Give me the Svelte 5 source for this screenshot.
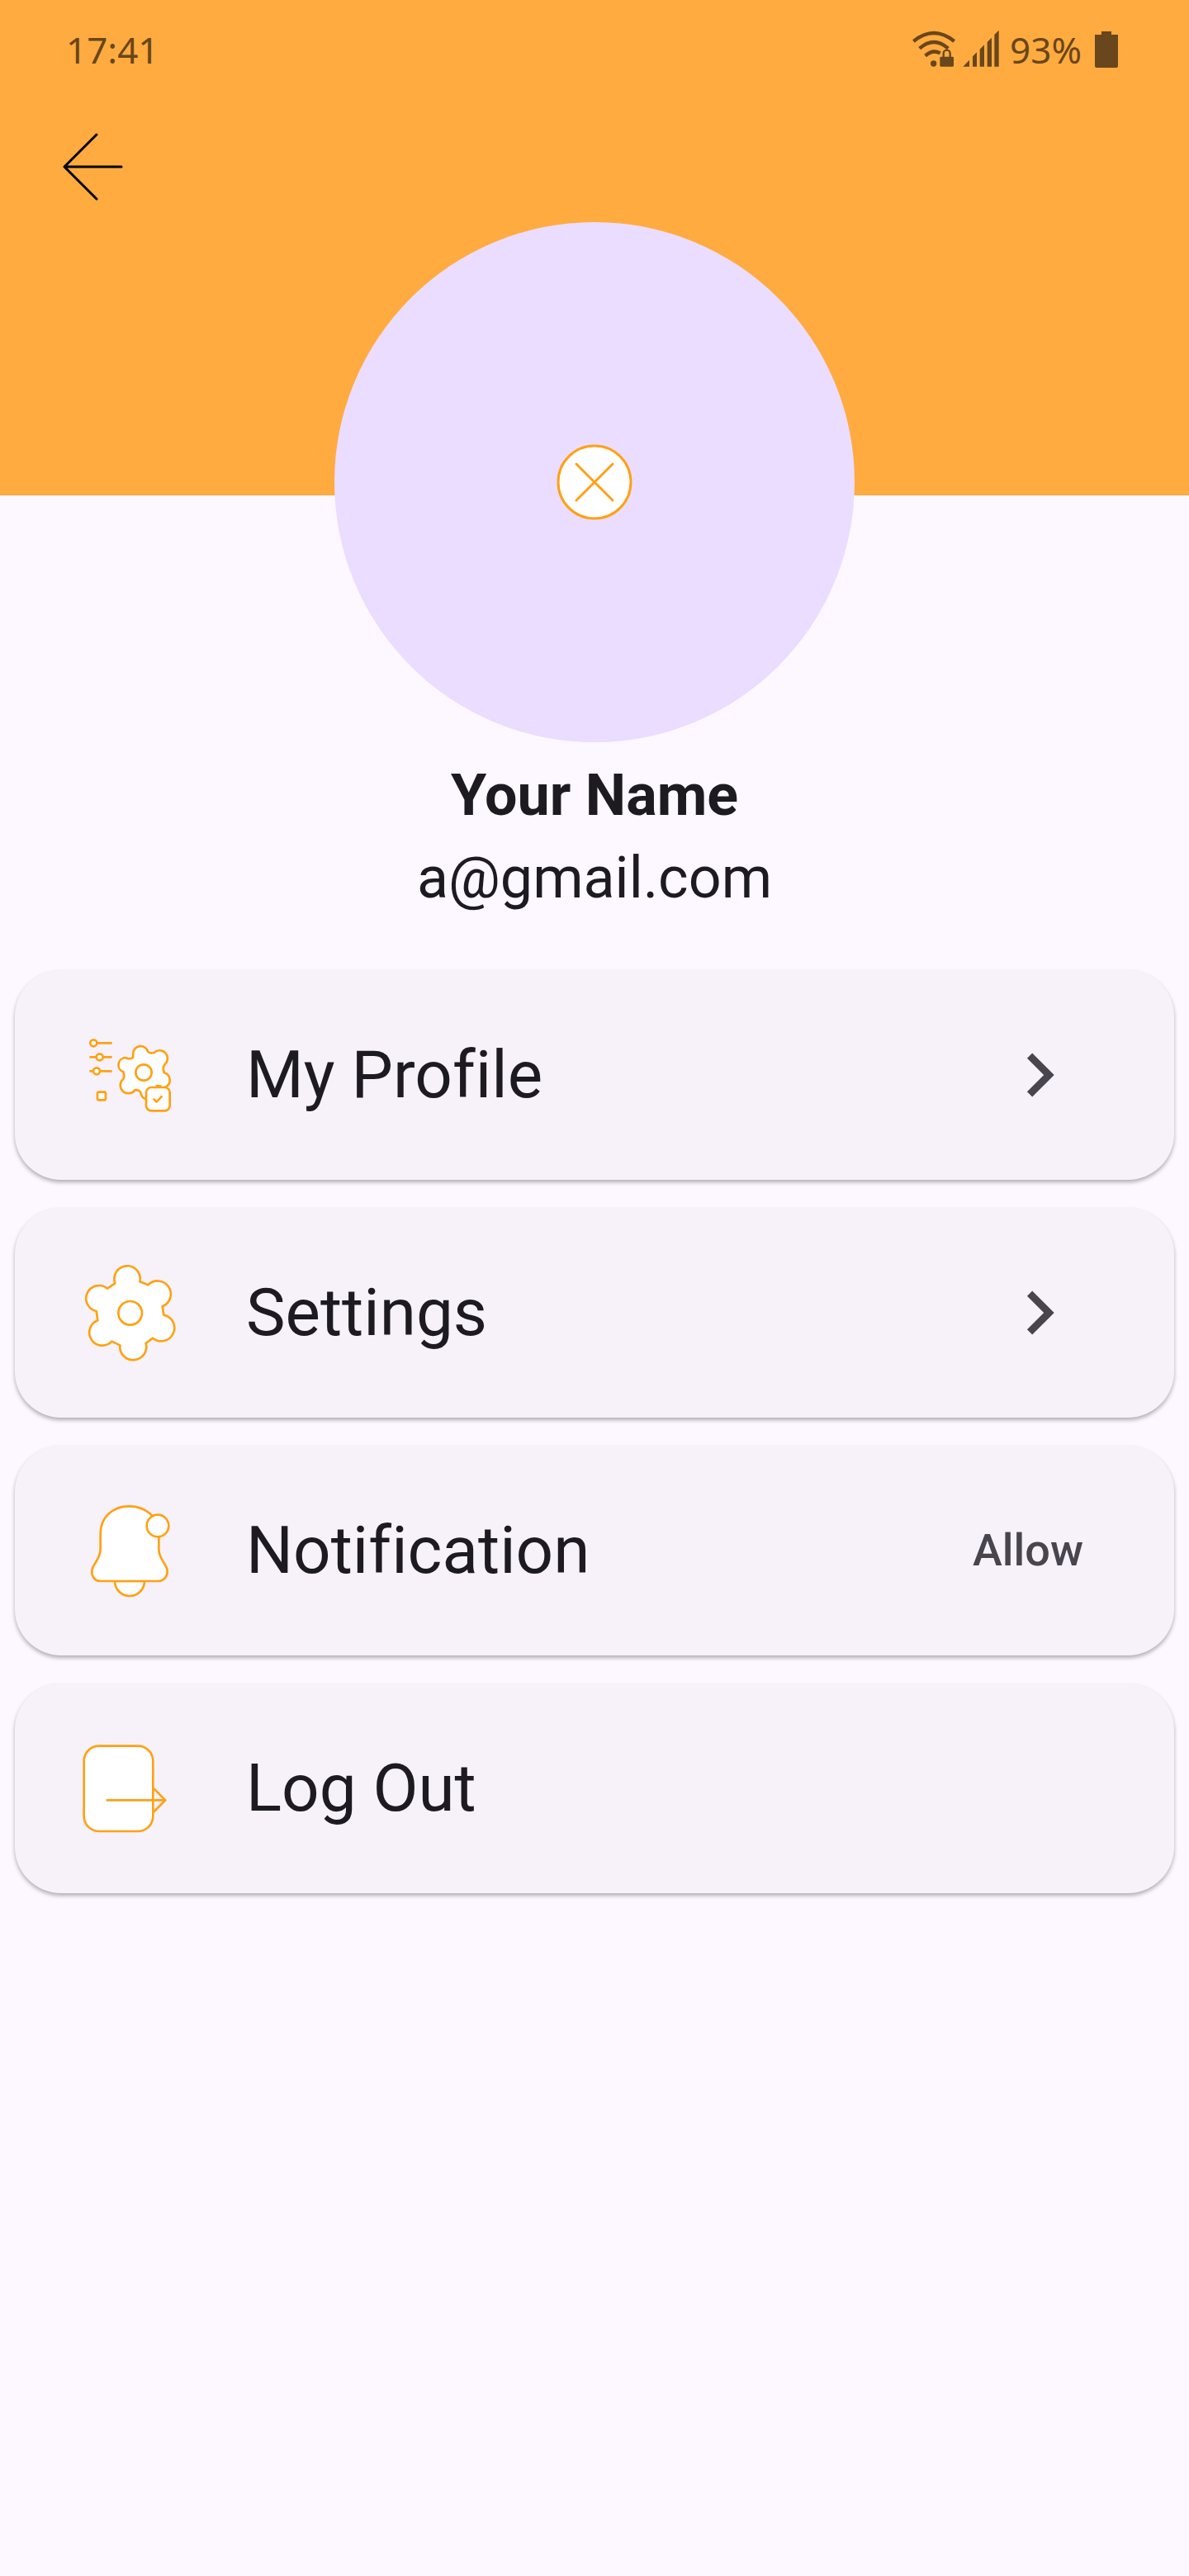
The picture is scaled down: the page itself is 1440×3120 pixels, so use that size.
<script lang="ts">
  type Item = { id: string; label: string; trailing: 'chevron' | 'allow' | 'none' };

  const items: Item[] = [
    { id: 'profile', label: 'My Profile', trailing: 'chevron' },
    { id: 'settings', label: 'Settings', trailing: 'chevron' },
    { id: 'notification', label: 'Notification', trailing: 'allow' },
    { id: 'logout', label: 'Log Out', trailing: 'none' },
  ];
</script>

<div class="screen">
  <header>
    <div class="status">
      <span>17:41</span>
      <div class="indicators">
        <svg class="signals" viewBox="0 0 318 144" aria-hidden="true">
          <g fill="none" stroke="currentColor" stroke-width="13">
            <path d="M4 42Q78 -18 152 42" />
            <path d="M26 68Q78 22 130 68" />
            <path d="M47 95Q73 70 101 85" />
          </g>
          <circle cx="77" cy="123" r="11" fill="currentColor" />
          <rect x="100" y="98" width="50" height="36" rx="4" fill="currentColor" />
          <path d="M113 100V86a12 12 0 0 1 24 0v14" fill="none" stroke="currentColor" stroke-width="7" />
          <path fill="currentColor" d="M184 134 207 110V134ZM219 97 234 82V134H219ZM245 71 261 55V134H245ZM272 45 288 29V134H272ZM298 18 314 2V134H298Z" />
        </svg>
        <span>93%</span>
        <svg class="battery" viewBox="0 0 28 44" aria-hidden="true">
          <path fill="currentColor" d="M8 0H20V4H28V42Q28 44 26 44H2Q0 44 0 42V4H8Z" />
        </svg>
      </div>
    </div>
    <button class="back" aria-label="Back">
      <svg viewBox="0 0 84 84" aria-hidden="true">
        <path d="M45 3 6 42 45 81M6 42H75" fill="none" stroke="#000" stroke-width="3" stroke-linecap="round" stroke-linejoin="round" />
      </svg>
    </button>
  </header>

  <main>
    <button class="avatar" aria-label="Change photo">
      <svg viewBox="0 0 92 92" aria-hidden="true">
        <g stroke="#ffa114" stroke-width="3" fill="#fff" stroke-linecap="round">
          <circle cx="46" cy="46" r="44" />
          <path d="M24 24 68 68M68 24 24 68" />
        </g>
      </svg>
    </button>
    <h1>Your Name</h1>
    <p>a@gmail.com</p>

    <ul>
      {#each items as item (item.id)}
        <li>
          <button class="card">
            {#if item.id === 'profile'}
              <svg class="icon" viewBox="0 -27 420 420" aria-hidden="true">
                <path d="M55 67H137M55 118H137M55 169H137" />
                <circle cx="70" cy="67" r="12" />
                <circle cx="92" cy="118" r="12" />
                <circle cx="81" cy="169" r="12" />
                <rect x="84" y="245" width="30" height="29" rx="5" />
                <path d="M214 104A27 27 0 0 1 267 98Q272 106 290 102A27 27 0 0 1 330 143Q318 156 327 175A28 28 0 0 1 336 224L262 272Q243 266 240 244Q232 235 220 238A28 28 0 1 1 173 203Q186 192 178 172A27 27 0 0 1 184 120Q203 128 213 119Z" />
                <circle cx="252" cy="174" r="29" />
                <path d="M296 225Q306 219 316 225" />
                <rect x="261" y="228" width="86" height="85" rx="19" />
                <path d="M287 269 299 281 319 259" />
              </svg>
            {:else if item.id === 'settings'}
              <svg class="icon" viewBox="0 -3 420 420" aria-hidden="true">
                <path d="M148 100A47 47 0 1 1 238 94L268 106A48 48 0 1 1 320 184L325 215A48 48 0 1 1 285 299L260 318A48 48 0 1 1 166 325L136 311A47 47 0 1 1 85 235L80 201A47 47 0 1 1 120 119Z" />
                <circle cx="203" cy="208" r="43" />
              </svg>
            {:else if item.id === 'notification'}
              <svg class="icon" viewBox="0 -9 420 420" aria-hidden="true">
                <path d="M147 312A54 54 0 0 0 255 312Z" />
                <path d="M95 312C72 312 62 292 64 273C68 246 95 234 95 196V139C95 79 141 40 199 40C258 40 307 79 307 139V196C307 234 334 246 338 273C340 292 327 312 304 312Z" />
                <circle cx="303" cy="111" r="40" />
              </svg>
            {:else}
              <svg class="icon" viewBox="0 -15 420 420" aria-hidden="true">
                <rect x="35" y="41" width="251" height="310" rx="55" />
                <path d="M116 238H331M287 194 331 238 287 282" fill="none" />
              </svg>
            {/if}
            <span class="label">{item.label}</span>
            {#if item.trailing === 'chevron'}
              <svg class="chevron" viewBox="0 0 24 24" aria-hidden="true">
                <path fill="currentColor" d="M10 6 8.590 7.410 13.170 12 8.590 16.590 10 18 16 12Z" />
              </svg>
            {:else if item.trailing === 'allow'}
              <span class="allow">Allow</span>
            {/if}
          </button>
        </li>
      {/each}
    </ul>
  </main>
</div>

<style>
  :global(body) {
    margin: 0;
    background: #fdf8ff;
  }

  .screen {
    min-height: 100vh;
    background: #fdf8ff;
    color: #1d1b20;
    font-family: Roboto, 'Liberation Sans', sans-serif;
    font-variant-ligatures: none;
  }

  button {
    padding: 0;
    border: 0;
    color: inherit;
    font: inherit;
    font-variant-ligatures: none;
    cursor: pointer;
  }

  svg {
    display: block;
    flex: none;
  }

  header {
    box-sizing: border-box;
    min-height: 600px;
    padding: 30px 86px 0 80px;
    background: #ffab40;
  }

  .status {
    display: flex;
    align-items: center;
    justify-content: space-between;
    height: 60px;
    color: #69461b;
    font-family: 'Noto Sans', sans-serif;
    font-size: 44px;
    line-height: 60px;
  }

  .indicators {
    display: flex;
    align-items: center;
    gap: 12px;
  }

  .signals {
    width: 106px;
    height: 48px;
  }

  .battery {
    width: 28px;
    height: 44px;
    margin-left: 4px;
  }

  .back {
    margin: 70px 0 0 -8px;
    background: none;
  }

  .back svg {
    width: 84px;
    height: 84px;
  }

  .avatar {
    display: grid;
    place-items: center;
    width: 630px;
    height: 630px;
    margin: -331px auto 0;
    border-radius: 50%;
    background: #eaddff;
  }

  .avatar svg {
    width: 92px;
    height: 92px;
  }

  h1,
  p {
    margin: 0;
    font-size: 70px;
    line-height: 100px;
    text-align: center;
  }

  h1 {
    margin-top: 14px;
    font-weight: 700;
  }

  p {
    font-weight: 400;
  }

  ul {
    display: flex;
    flex-direction: column;
    gap: 34px;
    margin: 0;
    padding: 62px 18px;
    list-style: none;
  }

  .card {
    display: flex;
    align-items: center;
    box-sizing: border-box;
    width: 100%;
    min-height: 254px;
    padding: 0 110px 0 72px;
    border-radius: 56px;
    background: #f7f2fa;
    box-shadow: 0 3px 5px rgba(0, 0, 0, 0.3);
    text-align: left;
  }

  .icon {
    width: 140px;
    height: 140px;
    margin-right: 68px;
    fill: #fff;
    stroke: #ffa114;
    stroke-width: 8px;
    stroke-linejoin: round;
  }

  .label {
    flex: 1;
    font-size: 80px;
    line-height: 112px;
  }

  .chevron {
    width: 106px;
    height: 106px;
    color: #49454f;
  }

  .allow {
    color: #49454f;
    font-size: 54px;
    font-weight: 500;
    line-height: 64px;
  }
</style>
